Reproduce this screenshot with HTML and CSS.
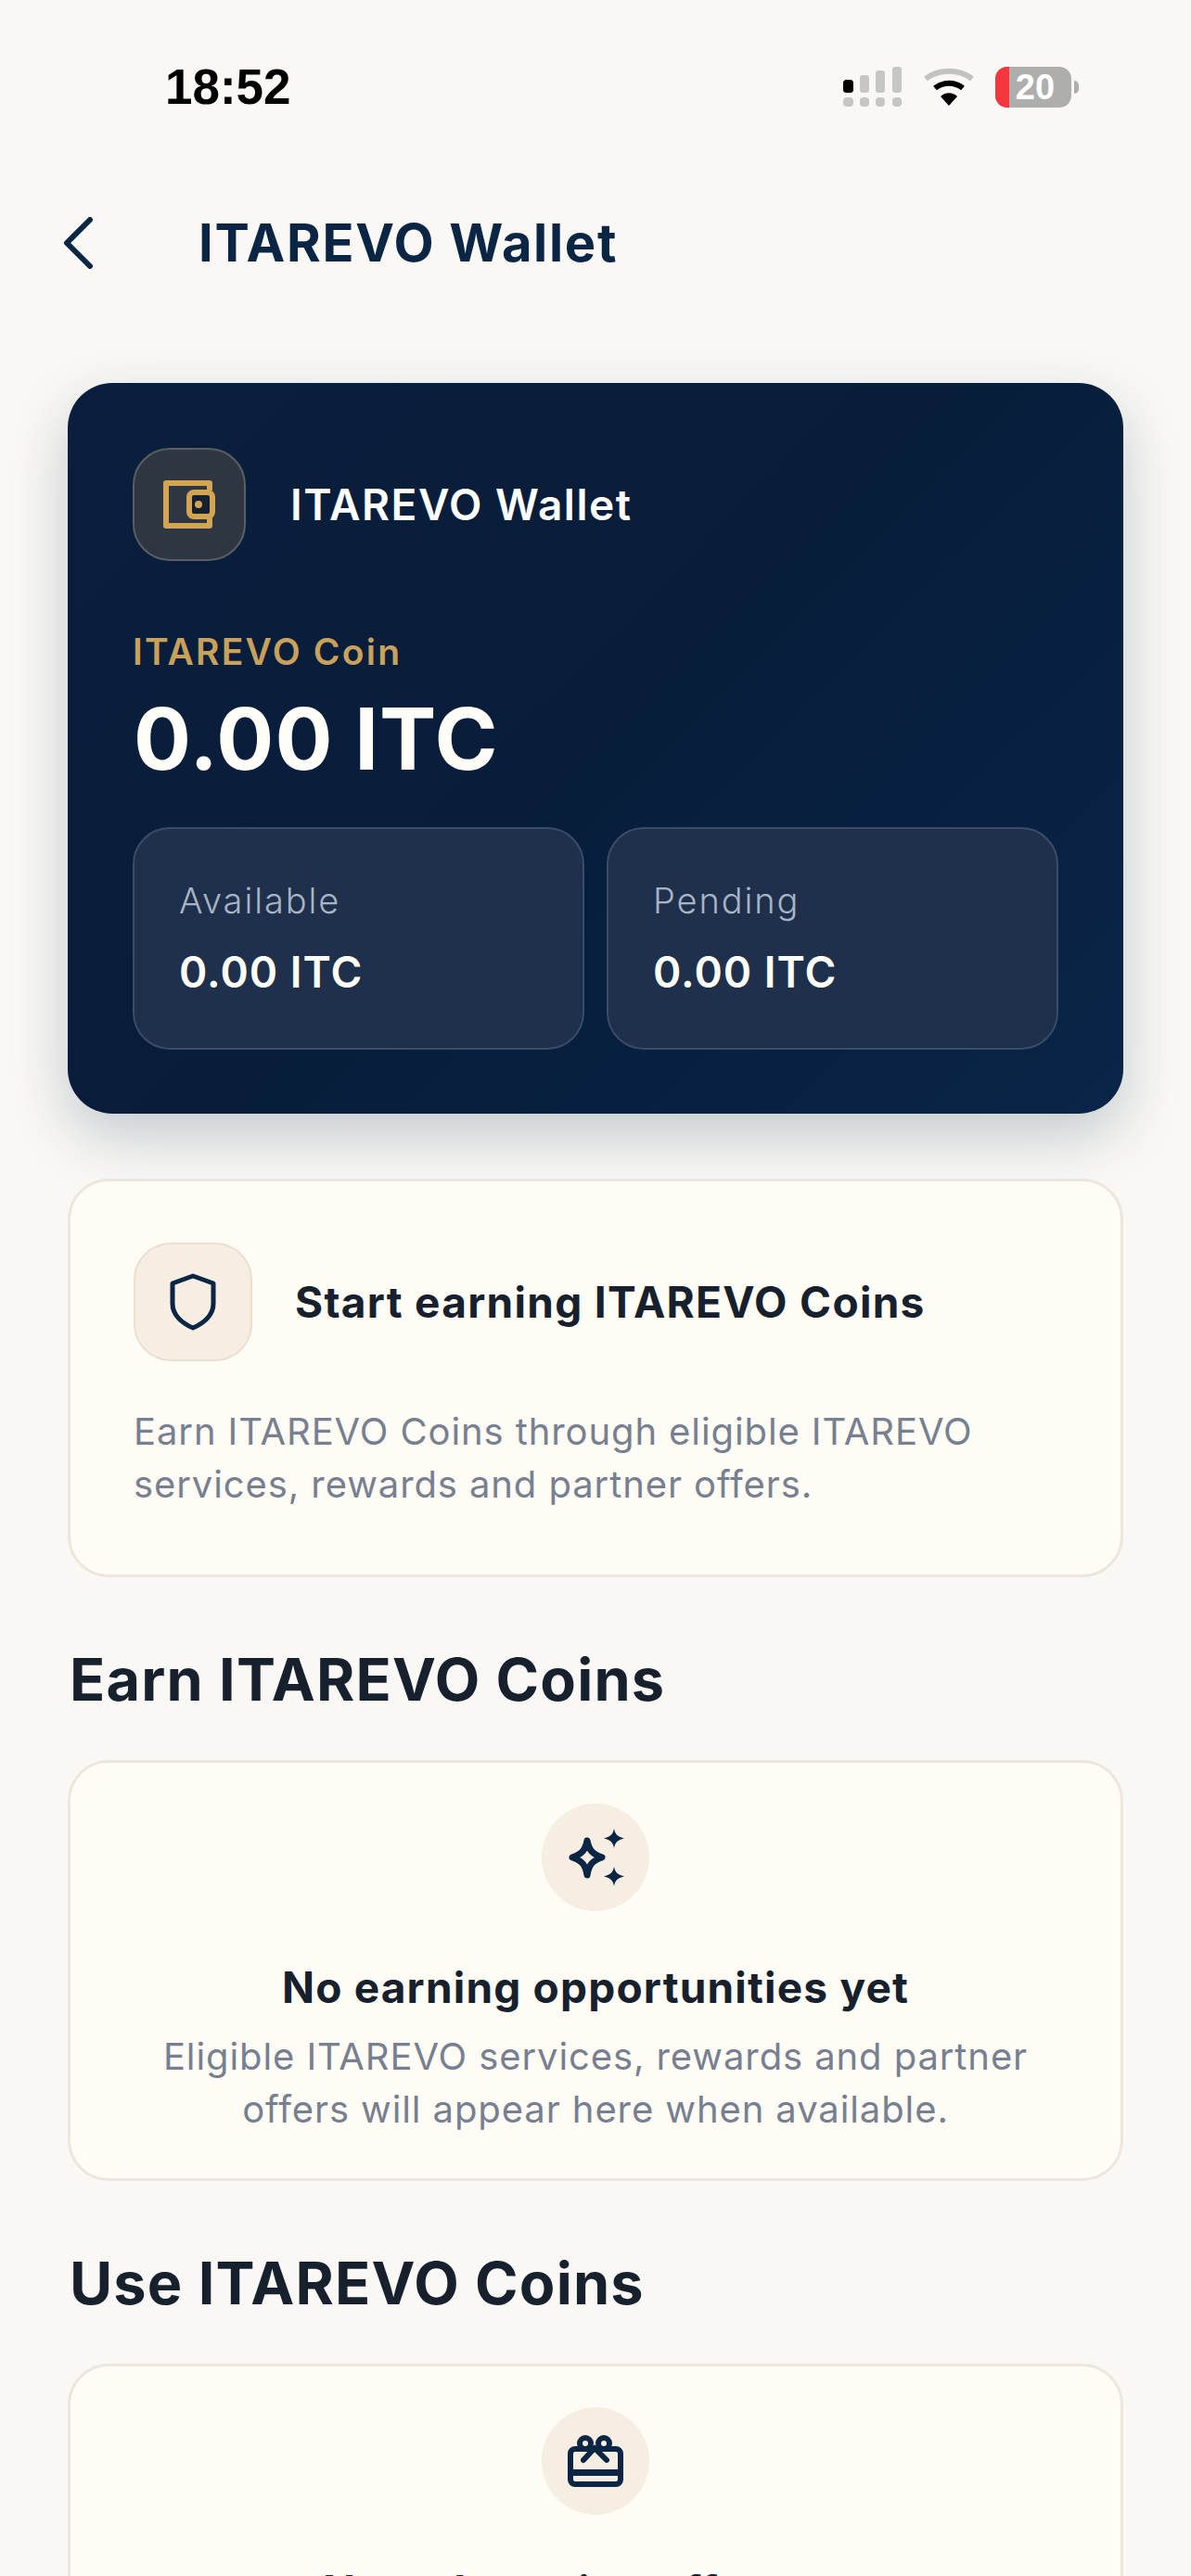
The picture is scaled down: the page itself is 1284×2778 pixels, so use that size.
FILE: index.html
```html
<!DOCTYPE html>
<html lang="en">
<head>
    <meta charset="UTF-8">
    <meta name="viewport" content="width=device-width, initial-scale=1.0">
    <title>ITAREVO Wallet</title>
    <link rel="stylesheet" href="styles.css">
</head>
<body>

    <div class="screen">
        <div class="status-bar">
            <span class="clock">18:52</span>
            <div class="status-icons">
                <svg class="signal" width="64" height="44" viewBox="0 0 64 44">
                    <rect x="0" y="14" width="11" height="14" rx="3.5" fill="#000"/>
                    <rect x="18" y="9" width="10" height="19" rx="3" fill="#c6c6c4"/>
                    <rect x="35" y="4" width="10" height="24" rx="3" fill="#c6c6c4"/>
                    <rect x="53" y="0" width="10" height="28" rx="3" fill="#c6c6c4"/>
                    <rect x="0" y="33" width="11" height="10" rx="4" fill="#c6c6c4"/>
                    <rect x="18" y="33" width="10" height="10" rx="4" fill="#c6c6c4"/>
                    <rect x="35" y="33" width="10" height="10" rx="4" fill="#c6c6c4"/>
                    <rect x="53" y="33" width="10" height="10" rx="4" fill="#c6c6c4"/>
                </svg>
                <svg class="wifi" width="56" height="42" viewBox="0 0 56 42">
                    <path d="M3 12C17 1 39 1 53 12" fill="none" stroke="#c2c2c0" stroke-width="6"/>
                    <path d="M13 22C22 15 34 15 43 22" fill="none" stroke="#000" stroke-width="6"/>
                    <path d="M19 31C24 26 32 26 37 31L28 41Z" fill="#000"/>
                </svg>
                <div class="battery">
                    <div class="battery-body"><span class="battery-level"></span><span class="battery-num">20</span></div>
                    <span class="battery-cap"></span>
                </div>
            </div>
        </div>

        <div class="top-bar">
            <svg class="back" width="34" height="56" viewBox="0 0 34 56">
                <path d="M30 3L5 28L30 53" fill="none" stroke="#0b2545" stroke-width="6" stroke-linecap="round" stroke-linejoin="round"/>
            </svg>
            <h1>ITAREVO Wallet</h1>
        </div>

        <div class="wallet-card">
            <div class="wallet-head">
                <div class="wallet-icon">
                    <svg width="56" height="52" viewBox="0 0 56 52">
                        <path d="M50 11V3H3V49H50V40" fill="none" stroke="#d3a553" stroke-width="6" stroke-linejoin="round"/>
                        <rect x="28" y="13" width="25" height="26" rx="5" fill="#162033" stroke="#d3a553" stroke-width="6"/>
                        <circle cx="38" cy="26" r="4" fill="#d3a553"/>
                    </svg>
                </div>
                <span class="wallet-name">ITAREVO Wallet</span>
            </div>
            <div class="coin-label">ITAREVO Coin</div>
            <div class="coin-amount">0.00 ITC</div>
            <div class="balances">
                <div class="balance">
                    <div class="balance-label">Available</div>
                    <div class="balance-value">0.00 ITC</div>
                </div>
                <div class="balance">
                    <div class="balance-label">Pending</div>
                    <div class="balance-value">0.00 ITC</div>
                </div>
            </div>
        </div>

        <div class="card intro-card">
            <div class="intro-head">
                <div class="intro-icon">
                    <svg width="52" height="62" viewBox="0 0 52 62">
                        <path d="M26 3L48 11V33C48 45 38 54 26 59C14 54 4 45 4 33V11Z" fill="none" stroke="#0b2545" stroke-width="5" stroke-linejoin="round"/>
                    </svg>
                </div>
                <h3>Start earning ITAREVO Coins</h3>
            </div>
            <p>Earn ITAREVO Coins through eligible ITAREVO services, rewards and partner offers.</p>
        </div>

        <h2>Earn ITAREVO Coins</h2>
        <div class="card empty-card">
            <div class="empty-icon">
                <svg width="62" height="62" viewBox="0 0 62 62">
                    <path d="M22 13C24 23 27 27 38 31C27 35 24 39 22 50C20 39 17 35 6 31C17 27 20 23 22 13Z" fill="none" stroke="#0b2545" stroke-width="7" stroke-linejoin="round"/>
                    <path d="M51 0C52 6 55 9 62 10.500C55 12 52 15 51 21C50 15 47 12 40 10.500C47 9 50 6 51 0Z" fill="#0b2545"/>
                    <path d="M51 41C52 47 55 50 62 51.500C55 53 52 56 51 62C50 56 47 53 40 51.500C47 50 50 47 51 41Z" fill="#0b2545"/>
                </svg>
            </div>
            <h4>No earning opportunities yet</h4>
            <p>Eligible ITAREVO services, rewards and partner offers will appear here when available.</p>
        </div>

        <h2>Use ITAREVO Coins</h2>
        <div class="card empty-card">
            <div class="empty-icon">
                <svg width="60" height="56" viewBox="0 0 60 56">
                    <rect x="3" y="15" width="54" height="38" rx="5" fill="none" stroke="#0b2545" stroke-width="6"/>
                    <rect x="3" y="37" width="54" height="7" fill="#0b2545"/>
                    <circle cx="19" cy="9" r="6" fill="none" stroke="#0b2545" stroke-width="6"/>
                    <circle cx="39" cy="9" r="6" fill="none" stroke="#0b2545" stroke-width="6"/>
                    <path d="M29 14L17 27M29 14L42 27" fill="none" stroke="#0b2545" stroke-width="6" stroke-linecap="round"/>
                </svg>
            </div>
            <h4>No redemption offers yet</h4>
        </div>
    </div>

</body>
</html>
```

FILE: styles.css
```css
* {
    margin: 0; padding: 0;
    box-sizing: border-box;
}
html, body {
    height: 100%;
    overflow: hidden;
}
body {
    background: #f9f8f5;
    font-family: 'Inter', sans-serif;
}
.screen {
    height: 2778px;
    overflow: hidden;
    padding: 0 73px;
}

/* status bar */
.status-bar {
    display: flex;
    align-items: center;
    justify-content: space-between;
    height: 72px;
    margin: 58px 0 0 105px;
    padding-right: 48px;
}
.clock {
    font-family: 'Liberation Sans', sans-serif;
    font-size: 53px;
    font-weight: 700;
    color: #000;
    margin-top: -2px;
}
.status-icons {
    display: flex;
    align-items: center;
    gap: 22px;
}
.battery {
    display: flex;
    align-items: center;
    gap: 3px;
}
.battery-body {
    position: relative;
    width: 82px;
    height: 44px;
    background: #aeaeac;
    border-radius: 13px;
    overflow: hidden;
    display: flex;
    align-items: center;
    justify-content: center;
}
.battery-level {
    position: absolute;
    left: 0; top: 0; bottom: 0;
    width: 15px;
    background: #f5363d;
}
.battery-num {
    position: relative;
    font-family: 'Liberation Sans', sans-serif;
    font-size: 38px;
    font-weight: 700;
    color: #fff;
    margin-left: 4px;
}
.battery-cap {
    width: 5px;
    height: 14px;
    background: #aeaeac;
    border-radius: 0 5px 5px 0;
}

/* header */
.top-bar {
    display: flex;
    align-items: center;
    height: 60px;
    margin: 102px 0 0 -6px;
}
.back {
    margin-right: 113px;
}
h1 {
    font-size: 56px;
    font-weight: 700;
    letter-spacing: 1.7px;
    color: #0b2545;
}

/* wallet */
.wallet-card {
    height: 788px;
    margin-top: 121px;
    padding: 70px 70px 0;
    border-radius: 48px;
    background: linear-gradient(135deg, #0a1f3d 0%, #071d3a 50%, #0a2548 100%);
    box-shadow: 0 24px 64px rgba(11,37,69,0.22);
    color: #fff;
}
.wallet-head {
    display: flex;
    align-items: center;
    gap: 48px;
}
.wallet-icon {
    width: 122px;
    height: 122px;
    display: flex;
    align-items: center;
    justify-content: center;
    background: #2e3641;
    border: 2px solid #5a5f63;
    border-radius: 40px;
}
.wallet-name {
    font-size: 46px;
    font-weight: 600;
    letter-spacing: 1.5px;
}
.coin-label {
    margin-top: 74px;
    font-size: 39px;
    font-weight: 600;
    letter-spacing: 2.2px;
    color: #c9a15a;
}
.coin-amount {
    margin: 15px 0 0 1px;
    font-size: 92px;
    font-weight: 700;
    line-height: 112px;
    letter-spacing: 1px;
    color: #fffdf8;
}
.balances {
    display: flex;
    gap: 24px;
    margin-top: 39px;
}
.balance {
    flex: 1;
    height: 240px;
    padding: 54px 48px 0;
    background: #1e304b;
    border: 2px solid #3a4c68;
    border-radius: 40px;
}
.balance-label {
    font-size: 38px;
    font-weight: 300;
    letter-spacing: 1.9px;
    color: #a9b4c4;
}
.balance-value {
    margin-top: 26px;
    font-size: 46px;
    font-weight: 600;
    letter-spacing: 1px;
    color: #fffdf8;
}

/* cards */
.card {
    background: #fffcf6;
    border: 3px solid #ece6dc;
    border-radius: 44px;
}
.intro-card {
    height: 430px;
    margin-top: 70px;
    padding: 66px 68px 0;
}
.intro-head {
    display: flex;
    align-items: center;
    gap: 46px;
}
.intro-icon {
    width: 128px;
    height: 128px;
    display: flex;
    align-items: center;
    justify-content: center;
    background: #f6eee2;
    border: 2px solid #ecdfd0;
    border-radius: 40px;
}
.intro-head h3 {
    font-size: 46px;
    font-weight: 700;
    color: #17212e;
    letter-spacing: 1.3px;
}
.intro-card p {
    margin-top: 47px;
    font-size: 40px;
    line-height: 57px;
    letter-spacing: 0.9px;
    color: #778090;
}
h2 {
    margin-top: 74px;
    margin-left: 2px;
    height: 72px;
    font-size: 63px;
    font-weight: 700;
    line-height: 72px;
    letter-spacing: 1.2px;
    color: #17212e;
}
.empty-card {
    height: 454px;
    margin-top: 51px;
    padding: 44px 70px 0;
    text-align: center;
}
.empty-icon {
    width: 116px;
    height: 116px;
    margin: 0 auto;
    display: flex;
    align-items: center;
    justify-content: center;
    background: #f6eee2;
    border-radius: 50%;
}
.empty-card h4 {
    margin-top: 54px;
    font-size: 46px;
    font-weight: 700;
    letter-spacing: 1.2px;
    color: #17212e;
}
.empty-card p {
    margin-top: 18px;
    font-size: 40px;
    line-height: 57px;
    letter-spacing: 0.9px;
    color: #778090;
}
```
